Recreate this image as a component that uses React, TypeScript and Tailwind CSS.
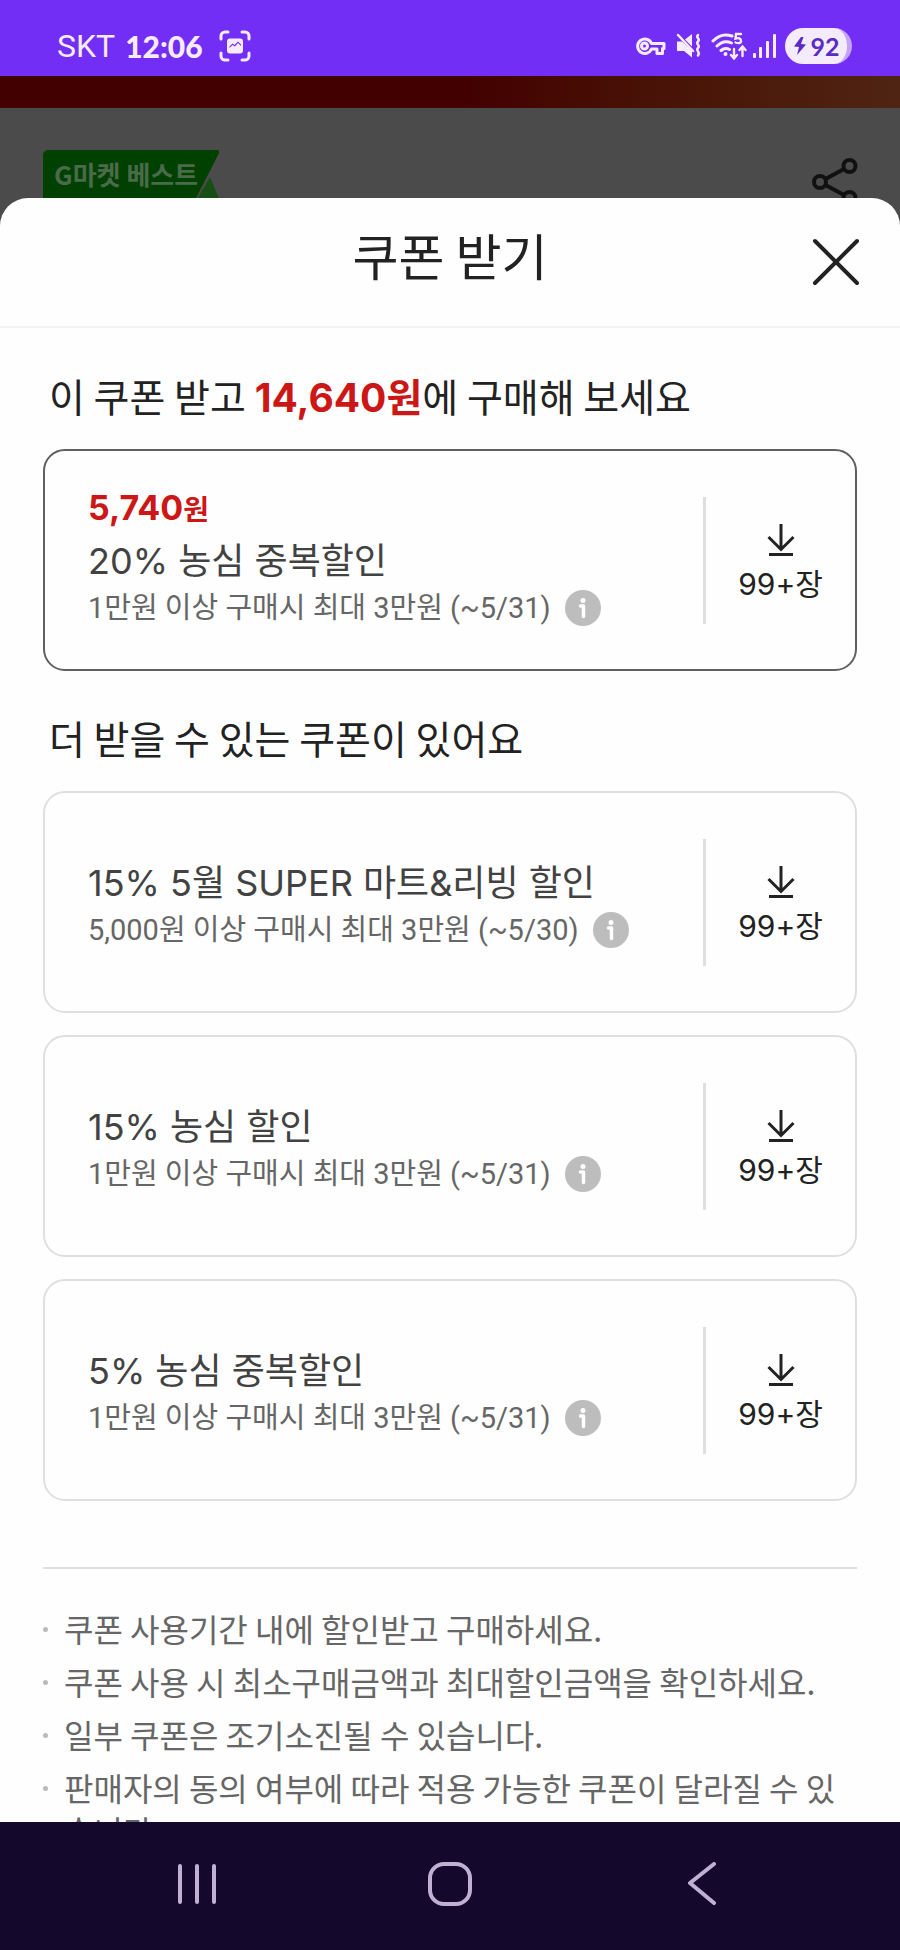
import React from 'react';

interface Coupon {
  id: number;
  amount?: string;
  title: string;
  condition: string;
  count: string;
}

const bestCoupon: Coupon = {
  id: 1,
  amount: '5,740',
  title: '20% 농심 중복할인',
  condition: '1만원 이상 구매시 최대 3만원 (~5/31)',
  count: '99+장',
};

const moreCoupons: Coupon[] = [
  { id: 2, title: '15% 5월 SUPER 마트&리빙 할인', condition: '5,000원 이상 구매시 최대 3만원 (~5/30)', count: '99+장' },
  { id: 3, title: '15% 농심 할인', condition: '1만원 이상 구매시 최대 3만원 (~5/31)', count: '99+장' },
  { id: 4, title: '5% 농심 중복할인', condition: '1만원 이상 구매시 최대 3만원 (~5/31)', count: '99+장' },
];

const notices = [
  '쿠폰 사용기간 내에 할인받고 구매하세요.',
  '쿠폰 사용 시 최소구매금액과 최대할인금액을 확인하세요.',
  '일부 쿠폰은 조기소진될 수 있습니다.',
  '판매자의 동의 여부에 따라 적용 가능한 쿠폰이 달라질 수 있습니다.',
];

const StatusBar: React.FC = () => (
  <header className="flex h-[76px] shrink-0 items-center justify-between bg-[#722ef5] pl-[57px] pr-12 pt-4 text-[#f7ecff]">
    <div className="flex items-center">
      <span className="font-['Roboto',sans-serif] text-[32px] leading-8">SKT</span>
      <span className="ml-2.5 font-['Lato',sans-serif] text-[30px] font-black leading-8">12:06</span>
      <svg className="ml-4 h-8 w-8" viewBox="0 0 32 32" fill="none" stroke="currentColor" strokeWidth="3" strokeLinecap="round">
        <path d="M2 9V6a4 4 0 0 1 4-4h3M23 2h3a4 4 0 0 1 4 4v3M30 23v3a4 4 0 0 1-4 4h-3M9 30H6a4 4 0 0 1-4-4v-3" />
        <path
          fillRule="evenodd"
          stroke="none"
          fill="currentColor"
          d="M11 8.500h10a3 3 0 0 1 3 3v9a3 3 0 0 1-3 3H11a3 3 0 0 1-3-3v-9a3 3 0 0 1 3-3ZM10.500 18l3-3 2.500 1.500 3-3.500 3 3v-1.500l-3-3-3.500 3.500-2-1.500-3 3Z"
        />
      </svg>
    </div>
    <div className="flex items-center">
      <svg className="h-5 w-8" viewBox="0 0 32 20" fill="none" stroke="currentColor">
        <path d="M16.500 7.500H29v5h-1.500v5H22v-4.500h-5.500a7.200 7.200 0 1 1 0-5.500Z" strokeWidth="3" strokeLinejoin="round" />
        <circle cx="9.500" cy="10" r="3" strokeWidth="3" />
      </svg>
      <svg className="ml-2 h-7 w-7" viewBox="0 0 28 28" fill="none" stroke="currentColor" strokeLinecap="round">
        <path d="M2 9.500h5l10 9v7l-8-6.500H2ZM10 7.500 17 2v12.500Z" fill="currentColor" stroke="none" />
        <path d="M3 3l15 16" strokeWidth="2.500" />
        <path d="M23 3c-3 3 3 3.500 0 6.500s3 3.500 0 6.500 3 3.500 0 7.500" strokeWidth="2.500" />
      </svg>
      <svg className="ml-2 h-7 w-9" viewBox="0 0 36 28" fill="none" stroke="currentColor" strokeLinecap="round">
        <path d="M2 9C8 2.500 15 2 21 4M6 14c4.500-4.500 10-5 14.500-3M10 18.500c3-2.500 6-2.500 8.500-1" strokeWidth="3" />
        <circle cx="14.500" cy="22" r="2" fill="currentColor" stroke="none" />
        <path d="M30 2h-5l-.5 4.500c3-1 5.500 0 5.500 2.500s-3 2.500-5.500 1.500" strokeWidth="2.400" />
        <path d="M23 17v9m-3-3 3 3.500 3-3.500M31.500 24v-9m-3 3 3-3.500 3 3.500" strokeWidth="2.400" />
      </svg>
      <svg className="ml-1.5 h-[26px] w-6" viewBox="0 0 24 26" fill="currentColor">
        <rect x="0" y="20" width="3" height="5" rx="1" />
        <rect x="6" y="14" width="3" height="11" rx="1" />
        <rect x="13" y="8" width="3" height="17" rx="1" />
        <rect x="20" y="1" width="3" height="24" rx="1" />
      </svg>
      <div className="ml-2 flex h-9 w-[67px] items-center justify-center rounded-full border-r-[5px] border-[#c3a2fa] bg-[#f4ecfd] text-[#5a2cc4]">
        <svg className="h-5 w-4" viewBox="0 0 16 20" fill="currentColor">
          <path d="M9 1 2 10.500l5 .5-2 8 9-10.500-5-.5 2.500-7Z" />
        </svg>
        <span className="ml-0.5 font-['Lato',sans-serif] text-[25px] font-bold leading-8">92</span>
      </div>
    </div>
  </header>
);

// Product page seen dimmed behind the sheet
const DimmedPage: React.FC = () => (
  <div className="h-full bg-[#4b4b4b]">
    <div className="h-8 bg-linear-to-r from-[#420000] from-50% to-[#4f2412]" />
    <div className="flex items-start justify-between pl-[43px] pr-[42px] pt-[42px]">
      <div className="relative h-14 w-44">
        <svg className="absolute inset-0 h-full w-full" viewBox="0 0 176 56">
          <path d="M150 56 167 27l12 29Z" fill="#164f16" />
          <path d="M0 56V5a5 5 0 0 1 5-5h169a2 2 0 0 1 2 3l-27 53Z" fill="#004000" />
        </svg>
        <span className="relative block pl-[11px] font-['Noto_Sans_CJK_KR',sans-serif] text-[26px] font-bold leading-[48px] text-[#4a6b4a]">
          G마켓 베스트
        </span>
      </div>
      <svg className="mt-2 h-12 w-[46px]" viewBox="0 0 46 48" fill="none" stroke="#111111" strokeWidth="4">
        <circle cx="37.500" cy="8" r="6" />
        <circle cx="8" cy="24" r="6" />
        <circle cx="37.500" cy="40" r="6" />
        <path d="M13.500 21 32 11M13.500 27 32 37" />
      </svg>
    </div>
  </div>
);

const CouponCard: React.FC<{ coupon: Coupon; highlighted?: boolean }> = ({ coupon, highlighted }) => (
  <article
    className={`flex min-h-[222px] items-center rounded-[22px] border-2 py-8 pl-[43px] ${
      highlighted ? 'border-[#606060]' : 'border-[#dfdfdf]'
    }`}
  >
    <div className="flex-1 pt-1.5">
      {coupon.amount && (
        <p className="-mt-3 mb-1 font-['Inter','Noto_Sans_CJK_KR',sans-serif] text-[34px] font-bold leading-[48px] text-[#cc1717]">
          {coupon.amount}
          <span className="text-[28px] leading-none">원</span>
        </p>
      )}
      <h3 className="font-['Inter','Noto_Sans_CJK_KR',sans-serif] text-[36px] leading-[50px] text-[#424242]">
        {coupon.title}
      </h3>
      <div className="flex items-center gap-3.5">
        <p className="font-['Roboto','Noto_Sans_CJK_KR',sans-serif] text-[29px] leading-[44px] text-[#666666]">
          {coupon.condition}
        </p>
        <button type="button" aria-label="쿠폰 상세 정보">
          <svg className="h-9 w-9" viewBox="0 0 36 36">
            <circle cx="18" cy="18" r="18" fill="#bdbdbd" />
            <circle cx="18" cy="10.500" r="2.500" fill="#ffffff" />
            <path d="M15.500 16h3v10.500" fill="none" stroke="#ffffff" strokeWidth="3.500" strokeLinecap="round" strokeLinejoin="round" />
          </svg>
        </button>
      </div>
    </div>
    <button
      type="button"
      className="flex h-[127px] w-[152px] shrink-0 flex-col items-center justify-center border-l-[3px] border-[#dfdfdf] pt-2 text-[#222222]"
    >
      <svg className="h-8 w-7" viewBox="0 0 28 32" fill="none" stroke="currentColor" strokeWidth="3">
        <path d="M14 0v25M1.500 13 14 25.500 26.500 13M2 30.500h24" />
      </svg>
      <span className="mt-2 font-['Inter','Noto_Sans_CJK_KR',sans-serif] text-[30px] leading-10">{coupon.count}</span>
    </button>
  </article>
);

const NavigationBar: React.FC = () => (
  <nav className="grid h-32 shrink-0 grid-cols-3 place-items-center bg-[#14082d] px-[70px] pb-1 text-[#beb1d2]">
    <button type="button" aria-label="최근 앱">
      <svg className="h-11 w-11" viewBox="0 0 44 44" fill="none" stroke="currentColor" strokeWidth="4" strokeLinecap="round">
        <path d="M5 4v36M22 4v36M39 4v36" />
      </svg>
    </button>
    <button type="button" aria-label="홈">
      <svg className="h-11 w-11" viewBox="0 0 44 44" fill="none" stroke="currentColor" strokeWidth="4">
        <rect x="2" y="2" width="40" height="40" rx="14" />
      </svg>
    </button>
    <button type="button" aria-label="뒤로">
      <svg className="h-11 w-11" viewBox="0 0 44 44" fill="none" stroke="currentColor" strokeWidth="4" strokeLinecap="round" strokeLinejoin="round">
        <path d="M33 2 9 21l24 20" />
      </svg>
    </button>
  </nav>
);

export default function App() {
  return (
    <div className="flex h-screen flex-col overflow-hidden font-['Noto_Sans_CJK_KR',sans-serif]">
      <StatusBar />
      <div className="relative min-h-0 flex-1">
        <DimmedPage />
        <section
          role="dialog"
          aria-labelledby="sheet-title"
          className="absolute inset-x-0 bottom-0 top-[122px] flex flex-col overflow-hidden rounded-t-[28px] bg-[#fefefe]"
        >
          <div className="grid h-[130px] shrink-0 grid-cols-[1fr_auto_1fr] items-center border-b-2 border-[#f3f3f3] px-10">
            <h1 id="sheet-title" className="col-start-2 pb-4 text-[50px] leading-[64px] text-[#222222]">
              쿠폰 받기
            </h1>
            <button type="button" aria-label="닫기" className="justify-self-end">
              <svg className="h-12 w-12" viewBox="0 0 48 48" fill="none" stroke="#222222" strokeWidth="4" strokeLinecap="round">
                <path d="M3 3l42 42M45 3 3 45" />
              </svg>
            </button>
          </div>

          <div className="min-h-0 flex-1 overflow-y-auto px-[43px] pb-10 pt-[43px] [scrollbar-width:none]">
            <h2 className="pl-1.5 text-[39px] leading-[48px] text-[#222222]">
              이 쿠폰 받고{' '}
              <strong className="font-['Inter','Noto_Sans_CJK_KR',sans-serif] font-bold leading-none text-[#cc1717]">
                14,640원
              </strong>
              에 구매해 보세요
            </h2>
            <div className="mt-[30px]">
              <CouponCard coupon={bestCoupon} highlighted />
            </div>

            <h2 className="mt-[42px] pl-1.5 text-[39px] leading-[48px] text-[#222222]">더 받을 수 있는 쿠폰이 있어요</h2>
            <div className="mt-[30px] flex flex-col gap-[22px]">
              {moreCoupons.map((coupon) => (
                <CouponCard key={coupon.id} coupon={coupon} />
              ))}
            </div>

            <ul className="mt-[66px] flex flex-col gap-2.5 border-t-2 border-[#dfdfdf] pt-[38px] text-[32px] leading-[43px] text-[#666666]">
              {notices.map((notice) => (
                <li key={notice} className="flex items-start">
                  <span className="mt-5 h-[5px] w-[5px] shrink-0 rounded-full bg-[#bbbbbb]" />
                  <span className="ml-4">{notice}</span>
                </li>
              ))}
            </ul>
          </div>
        </section>
      </div>
      <NavigationBar />
    </div>
  );
}
